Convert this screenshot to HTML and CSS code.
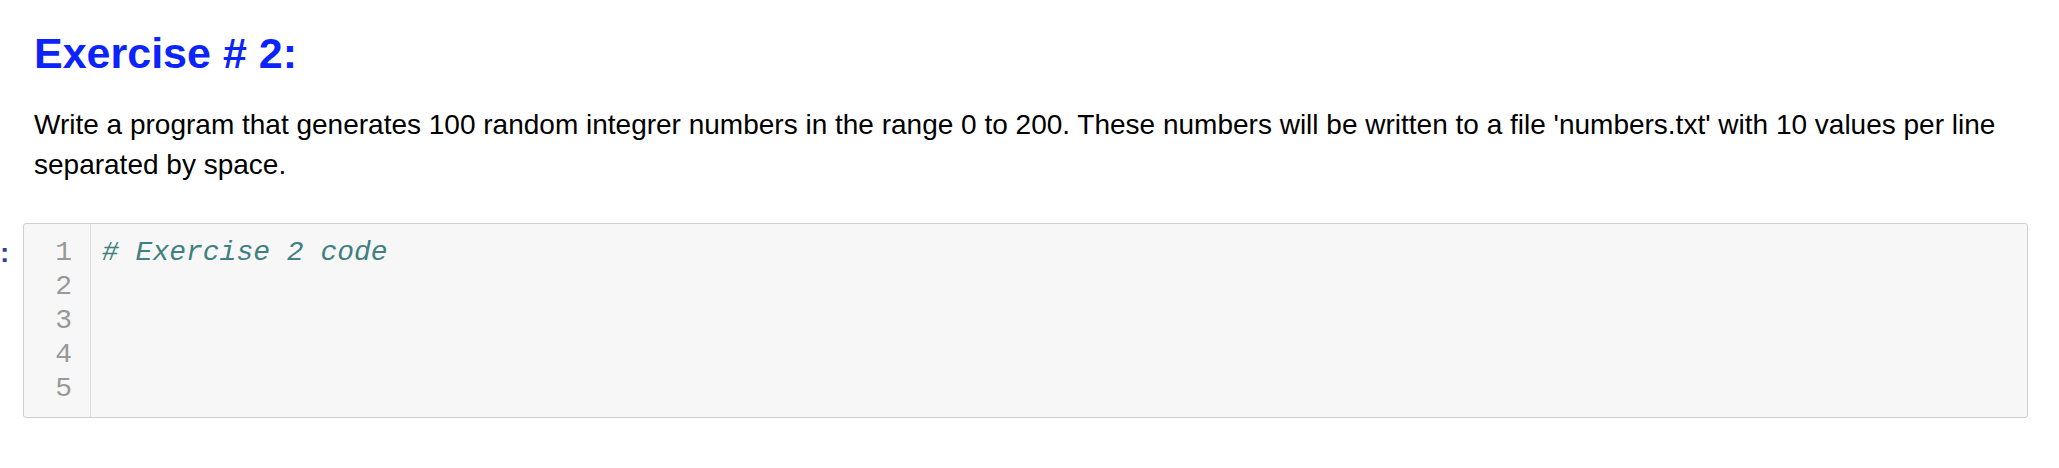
FILE: index.html
```html
<!DOCTYPE html>
<html lang="en">
<head>
<meta charset="utf-8">
<title>Exercise # 2</title>
<link rel="stylesheet" href="styles.css">
</head>
<body>
<div class="notebook">
  <div class="text-cell">
    <h2 class="heading">Exercise # 2:</h2>
    <p class="para">Write a program that generates 100 random integrer numbers in the range 0 to 200. These numbers will be written to a file 'numbers.txt' with 10 values per line separated by space.</p>
  </div>
  <div class="code-cell">
    <div class="prompt"><span class="prompt-text">:</span></div>
    <div class="input-area">
      <div class="gutter">
        <div class="ln">1</div>
        <div class="ln">2</div>
        <div class="ln">3</div>
        <div class="ln">4</div>
        <div class="ln">5</div>
      </div>
      <div class="code">
        <div class="line"><span class="comment"># Exercise 2 code</span></div>
        <div class="line">&nbsp;</div>
        <div class="line">&nbsp;</div>
        <div class="line">&nbsp;</div>
        <div class="line">&nbsp;</div>
      </div>
    </div>
  </div>
</div>
</body>
</html>
```

FILE: styles.css
```css
html, body {
  margin: 0;
  padding: 0;
  background: #ffffff;
}

.notebook {
  padding-top: 32px;
  padding-right: 31px;
  font-family: "Liberation Sans", Arial, Helvetica, sans-serif;
  color: #000000;
}

.text-cell {
  padding-left: 34px;
}

.heading {
  margin: 0;
  font-size: 43px;
  line-height: 43px;
  font-weight: bold;
  color: #0b24fb;
}

.para {
  margin: 30px 0 0 0;
  font-size: 28px;
  line-height: 40px;
}

.code-cell {
  margin-top: 38px;
  display: flex;
  align-items: flex-start;
}

.prompt {
  width: 10px;
  margin-right: 13px;
  white-space: nowrap;
  padding-top: 13px;
  font-family: "Liberation Sans", Arial, sans-serif;
  font-size: 28px;
  line-height: 34px;
  color: #303f9f;
  font-weight: bold;
}

.input-area {
  flex: 1;
  display: flex;
  border: 1px solid #cfcfcf;
  border-radius: 3px;
  background: #f7f7f7;
  font-family: "Liberation Mono", "Courier New", monospace;
  font-size: 28px;
  line-height: 34px;
}

.gutter {
  width: 48px;
  padding: 12px 18px 11px 0;
  border-right: 1px solid #dddddd;
  text-align: right;
  color: #999999;
}

.code {
  flex: 1;
  padding: 12px 0 11px 11px;
}

.line {
  white-space: pre;
}

.comment {
  color: #408080;
  font-style: italic;
}
```
